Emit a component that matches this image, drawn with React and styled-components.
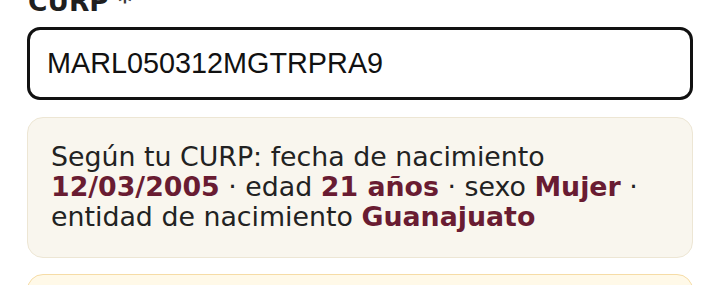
import React from "react";
import styled, { createGlobalStyle } from "styled-components";

const Global = createGlobalStyle`
  html, body { margin: 0; padding: 0; background: #ffffff; }
  body { font-family: "DejaVu Sans", Verdana, sans-serif; color: #222222; overflow: hidden; }
`;

const Page = styled.div`
  width: 666px;
  padding: 0 27px;
  margin-top: -13px;
  display: flex;
  flex-direction: column;
`;

const Field = styled.div`
  display: flex;
  flex-direction: column;
  gap: 10px;
`;

const Label = styled.label`
  font-family: "DejaVu Sans", Verdana, sans-serif;
  font-weight: 700;
  font-size: 26.5px;
  line-height: 30px;
  color: #1f1f1f;
  padding-left: 1px;
`;

const Required = styled.span`
  color: #3a3a3a;
  font-weight: 700;
`;

const Input = styled.input`
  box-sizing: border-box;
  width: 100%;
  height: 73px;
  border: 3px solid #111111;
  border-radius: 13px;
  padding: 0 17px;
  font-family: "Liberation Sans", Arial, sans-serif;
  font-size: 28.8px;
  color: #111111;
  background: #ffffff;
  outline: none;
`;

const Notice = styled.div`
  box-sizing: border-box;
  margin-top: ${(p) => p.$gap}px;
  border: 1.5px solid ${(p) => (p.$tone === "warn" ? "#f6dca6" : "#ede6d4")};
  background: ${(p) => (p.$tone === "warn" ? "#fff9e8" : "#f9f6ee")};
  border-radius: 16px;
  padding: 24px 23px 25px;
  font-size: 26.8px;
  line-height: 30px;
  color: #222222;
  min-height: ${(p) => p.$minHeight || 0}px;
`;

const Strong = styled.strong`
  font-weight: 700;
  color: #691c32;
`;

export default function App() {
  return (
    <>
      <Global />
      <Page>
        <Field>
          <Label>
            CURP <Required>*</Required>
          </Label>
          <Input defaultValue="MARL050312MGTRPRA9" readOnly />
        </Field>
        <Notice $gap={17}>
          Según tu CURP: fecha de nacimiento <Strong>12/03/2005</Strong> · edad{" "}
          <Strong>21 años</Strong> · sexo <Strong>Mujer</Strong> · entidad de
          nacimiento <Strong>Guanajuato</Strong>
        </Notice>
        <Notice $gap={16} $tone="warn" $minHeight={60} />
      </Page>
    </>
  );
}
